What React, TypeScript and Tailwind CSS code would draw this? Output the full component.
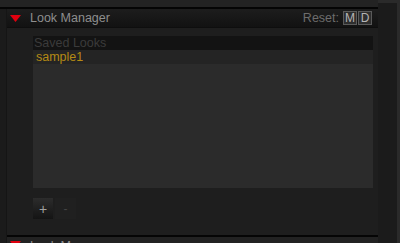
import React from "react";

const font = { fontFamily: '"Liberation Sans", Arial, sans-serif' };

function Triangle({ className = "" }: { className?: string }) {
  return (
    <svg width="11" height="7" viewBox="0 0 11 7" className={className}>
      <polygon points="0,0 11,0 5.5,7" fill="#e0000f" />
    </svg>
  );
}

function ResetKey({ label }: { label: string }) {
  return (
    <div className="w-[14px] h-[14px] flex items-center justify-center border border-[#5a5a5a] bg-[#2e2e2e] text-[12px] leading-none text-[#b5b5b5]">
      {label}
    </div>
  );
}

export default function App() {
  return (
    <div
      className="w-[400px] h-[243px] overflow-hidden bg-[#1e1e1e] flex"
      style={font}
    >
      <div className="w-[378px] flex flex-col">
        <div className="h-[7px] bg-[#232323]" />
        <div className="h-[2px] bg-[#050505]" />
        <div className="flex flex-1">
          <div className="w-[7px] bg-[#1b1b1b] border-r border-[#151515]" />
          <div className="flex-1 flex flex-col">
            {/* header */}
            <div className="h-[19px] flex items-center bg-gradient-to-b from-[#1d1d1d] to-[#121212] border-b border-[#0e0e0e]">
              <Triangle className="ml-[3px]" />
              <span className="ml-[9px] text-[12.5px] text-[#8e8e8e] leading-none">
                Look Manager
              </span>
              <div className="ml-auto flex items-center mr-[6px]">
                <span className="text-[12.5px] text-[#6c6c6c] leading-none mr-[4px]">
                  Reset:
                </span>
                <ResetKey label="M" />
                <div className="w-[1px]" />
                <ResetKey label="D" />
              </div>
            </div>
            {/* body */}
            <div className="flex-1 flex flex-col pl-[26px] pt-[8px]">
              <div className="w-[340px] h-[152px] bg-[#2b2b2b] flex flex-col">
                <div className="h-[14px] bg-[#131313] flex items-center px-[1px] text-[12.5px] leading-none text-[#3b3b3b]">
                  Saved Looks
                </div>
                <div className="h-[14px] bg-[#242424] flex items-center px-[3px] text-[12.5px] leading-none text-[#b58a14]">
                  sample1
                </div>
              </div>
              <div className="flex gap-[2px] mt-[10px]">
                <div className="w-[20px] h-[21px] bg-gradient-to-b from-[#2c2c2c] to-[#141414] flex items-center justify-center text-[14px] leading-none text-[#a0a0a0]">
                  +
                </div>
                <div className="w-[21px] h-[21px] bg-[#202020] flex items-center justify-center text-[12px] leading-none text-[#444]">
                  -
                </div>
              </div>
              <div className="flex-1" />
            </div>
            <div className="h-[2px] bg-[#050505]" />
            <div className="h-[6px] bg-[#222] flex items-start overflow-hidden">
              <Triangle className="ml-[3px] translate-y-[4px]" />
              <span className="ml-[9px] text-[12.5px] text-[#8e8e8e] leading-none translate-y-[3px]">
                Look Manager
              </span>
            </div>
          </div>
        </div>
      </div>
      <div className="w-[22px] flex flex-col">
        <div className="h-[3px] bg-[#2a2a2a]" />
        <div className="flex-1 flex">
          <div className="w-[19px] bg-[#1b1b1b]" />
          <div className="w-[3px] bg-[#2a2a2a]" />
        </div>
      </div>
    </div>
  );
}
